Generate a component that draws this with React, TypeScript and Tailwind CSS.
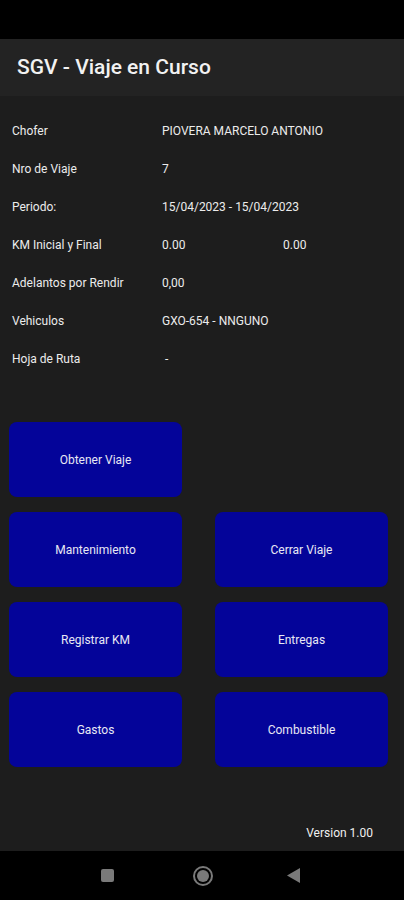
import React from 'react'

const rows: [string, React.ReactNode][] = [
  ['Chofer', 'PIOVERA MARCELO ANTONIO'],
  ['Nro de Viaje', '7'],
  ['Periodo:', '15/04/2023 - 15/04/2023'],
  [
    'KM Inicial y Final',
    <div className="flex">
      <span className="w-[121px]">0.00</span>
      <span>0.00</span>
    </div>,
  ],
  ['Adelantos por Rendir', '0,00'],
  ['Vehiculos', 'GXO-654 - NNGUNO'],
  ['Hoja de Ruta', <span className="pl-[3px]">-</span>],
]

const ActionButton = ({ label }: { label: string }) => (
  <button
    type="button"
    className="h-[75px] w-[173px] rounded-[8px] bg-[#040499] text-[12px] text-[#e8e8f4]"
  >
    {label}
  </button>
)

const App: React.FC = () => {
  return (
    <div
      className="flex h-[900px] w-[404px] flex-col bg-[#1d1d1d] text-white"
      style={{ fontFamily: 'Roboto, "Liberation Sans", sans-serif' }}
    >
      <div className="h-[39px] bg-black" />

      <header className="flex h-[57px] items-center bg-[#232323] px-[17px]">
        <h1 className="text-[21px] font-medium text-[#f2f2f2]">
          SGV - Viaje en Curso
        </h1>
      </header>

      <div className="flex flex-1 flex-col">
        <div className="flex flex-col pt-[16px]">
          {rows.map(([label, value], i) => (
            <div
              key={i}
              className="flex h-[38px] items-center px-[12px] text-[12px] text-[#ececec]"
            >
              <span className="w-[150px]">{label}</span>
              <div>{value}</div>
            </div>
          ))}
        </div>

        <div className="mt-[44px] flex flex-col gap-[15px] pl-[9px]">
          <div className="flex gap-[33px]">
            <ActionButton label="Obtener Viaje" />
          </div>
          <div className="flex gap-[33px]">
            <ActionButton label="Mantenimiento" />
            <ActionButton label="Cerrar Viaje" />
          </div>
          <div className="flex gap-[33px]">
            <ActionButton label="Registrar KM" />
            <ActionButton label="Entregas" />
          </div>
          <div className="flex gap-[33px]">
            <ActionButton label="Gastos" />
            <ActionButton label="Combustible" />
          </div>
        </div>

        <div className="mt-auto flex justify-end pb-[9px] pr-[31px]">
          <span className="text-[12px] text-[#f0f0f0]">Version 1.00</span>
        </div>
      </div>

      <nav className="flex h-[49px] items-center justify-center bg-black">
        <div className="mr-[4px] flex items-center">
          <div className="h-[13px] w-[13px] rounded-[2px] bg-[#7a7a7a]" />
          <div className="ml-[79px] flex h-[20px] w-[20px] items-center justify-center rounded-full border-[2px] border-[#7a7a7a]">
            <div className="h-[12px] w-[12px] rounded-full bg-[#7a7a7a]" />
          </div>
          <svg className="ml-[74px]" width="13" height="15" viewBox="0 0 13 15">
            <path d="M13 0 L13 15 L0 7.5 Z" fill="#7a7a7a" />
          </svg>
        </div>
      </nav>
    </div>
  )
}

export default App
